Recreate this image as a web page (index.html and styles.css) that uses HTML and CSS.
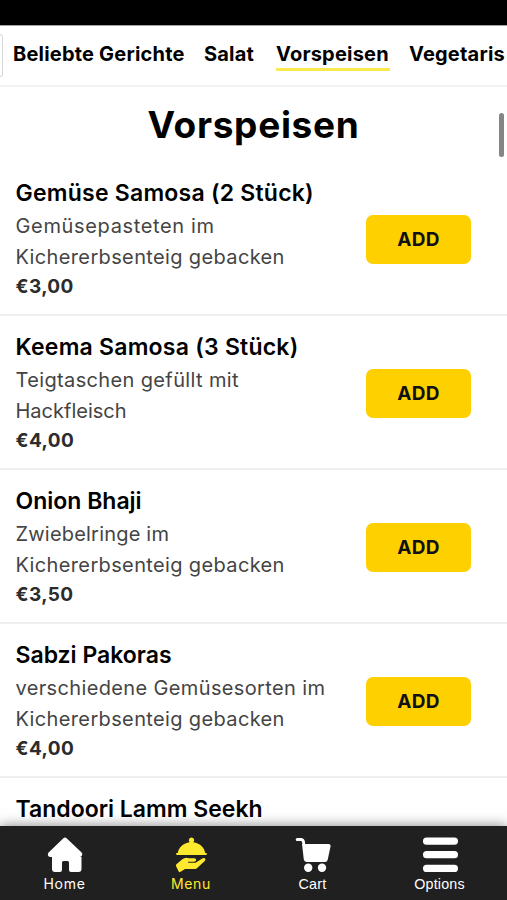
FILE: index.html
```html
<!DOCTYPE html>
<html lang="de">
<head>
    <meta charset="UTF-8">
    <meta name="viewport" content="width=device-width, initial-scale=1.0">
    <title>Vorspeisen</title>
    <link rel="stylesheet" href="styles.css">
</head>
<body>
    <div class="status-bar"></div>

    <nav class="categories">
        <span class="search-box"></span>
        <a class="wide">Beliebte Gerichte</a>
        <a class="salat">Salat</a>
        <a class="active">Vorspeisen</a>
        <a class="vegi">Vegetaris</a>
    </nav>

    <main class="menu">
        <h1>Vorspeisen</h1>

        <div class="item">
            <div class="info">
                <h2 class="spaced">Gemüse Samosa (2 Stück)</h2>
                <p><span class="loose">Gemüsepasteten im</span><br>Kichererbsenteig gebacken</p>
                <strong>€3,00</strong>
            </div>
            <button>ADD</button>
        </div>
        <div class="item">
            <div class="info">
                <h2 class="spaced">Keema Samosa (3 Stück)</h2>
                <p>Teigtaschen gefüllt mit<br><span class="tight">Hackfleisch</span></p>
                <strong>€4,00</strong>
            </div>
            <button>ADD</button>
        </div>
        <div class="item">
            <div class="info">
                <h2>Onion Bhaji</h2>
                <p><span class="narrow">Zwiebelringe im</span><br>Kichererbsenteig gebacken</p>
                <strong>€3,50</strong>
            </div>
            <button>ADD</button>
        </div>
        <div class="item">
            <div class="info">
                <h2>Sabzi Pakoras</h2>
                <p>verschiedene Gemüsesorten im<br>Kichererbsenteig gebacken</p>
                <strong>€4,00</strong>
            </div>
            <button>ADD</button>
        </div>
        <div class="item">
            <div class="info">
                <h2>Tandoori Lamm Seekh</h2>
            </div>
        </div>
    </main>

    <div class="scroll-thumb"></div>

    <footer class="tab-bar">
        <a class="tab home">
            <svg viewBox="0 0 36 36"><path d="M16.4 1.2Q18 0 19.6 1.2L34.6 15.5Q36 17 34.8 18.8Q34 20 32.3 20H34.5V32Q34.5 35 31.5 35H24Q22 35 22 33V25.5Q22 24 20.5 24H16.5Q15 24 15 25.5V33Q15 35 13 35H8Q5 35 5 32V20H3Q1.6 20 1 18.6Q.4 17 1.6 15.5Z"/></svg>
            <span>Home</span>
        </a>
        <a class="tab current">
            <svg viewBox="0 0 36 36"><path d="M18.5 .5A2.7 2.7 0 0 1 20.3 5.2C27.5 6.3 31.6 11 32.2 16H33.2Q34 16 34 16.8Q34 17.9 33 17.9H4Q3 17.9 3 16.8Q3 16 3.8 16H4.8C5.4 11 9.5 6.3 16.7 5.2A2.7 2.7 0 0 1 18.5 .5Z"/><path d="M3.2 27.6L9 22.4Q12.3 20 15.5 21.2H21.3Q23.2 21.2 23.2 23Q23 24.7 21 24.7H15.3Q14.5 25 15.3 25.8H22.5L29.7 21.3Q31.5 20.5 32.3 21.8Q32.8 22.9 31.5 24.2L24.7 30.4Q23.4 32 21.5 32H12L7.2 35.1Q6.1 35.4 5.6 34.3L3.2 29.4Q2.6 28.2 3.2 27.6Z"/></svg>
            <span>Menu</span>
        </a>
        <a class="tab cart">
            <svg viewBox="0 0 36 36"><path d="M2.2 2.6H6.3Q8.2 2.8 8.7 6" fill="none" stroke="currentColor" stroke-width="3" stroke-linecap="round"/><path d="M7 7H33.5Q36 7 35.5 9.5L32.7 22.7Q32.2 25 30 25H11.5Q9.3 25 8.8 22.6Z"/><circle cx="13.2" cy="30.7" r="4.2"/><circle cx="27" cy="30.7" r="4.2"/></svg>
            <span>Cart</span>
        </a>
        <a class="tab options">
            <svg viewBox="0 0 36 36"><rect x="1" y="0.5" width="35" height="7.3" rx="3.6"/><rect x="1" y="14" width="35" height="7.3" rx="3.6"/><rect x="1" y="27.7" width="35" height="7.3" rx="3.6"/></svg>
            <span>Options</span>
        </a>
    </footer>
</body>
</html>
```
FILE: styles.css
```css
* {
    margin: 0;
    padding: 0;
    box-sizing: border-box;
}

body {
    font-family: 'Inter', sans-serif;
    background: #fff;
    color: #000;
    height: 900px;
    display: flex;
    flex-direction: column;
    overflow: hidden;
}

.status-bar {
    height: 25px;
    flex: none;
    background: #000;
}

.categories {
    height: 62px;
    flex: none;
    display: flex;
    align-items: flex-start;
    padding-top: 8px;
    border-top: 1px solid #a5a5a5;
    border-bottom: 2px solid #f2f2f2;
    overflow: hidden;
    white-space: nowrap;
}

.search-box {
    flex: none;
    width: 3px;
    height: 43px;
    margin-right: 10px;
    border: 1px solid #d8d8d8;
    border-left: 0;
    border-radius: 0 4px 4px 0;
}

.categories a {
    flex: none;
    height: 37px;
    margin-right: 19px;
    font-size: 20px;
    line-height: 40px;
    font-weight: 700;
    letter-spacing: 0.2px;
    width: 114px;
}

.categories .wide {
    width: 172px;
}

.categories .salat {
    width: 53px;
}

.categories .active {
    border-bottom: 3px solid #fbea4f;
}

.categories .vegi {
    width: 98px;
    margin-right: 0;
}

.menu {
    flex: 1;
    min-height: 0;
    overflow: hidden;
}

h1 {
    height: 75px;
    font-size: 37px;
    line-height: 76px;
    font-weight: 700;
    letter-spacing: 0.7px;
    text-align: center;
}

.item {
    height: 154px;
    display: flex;
    justify-content: space-between;
    align-items: flex-start;
    padding: 14px 36px 0 15.5px;
    border-bottom: 2px solid #eee;
    white-space: nowrap;
}

.item h2 {
    font-size: 23px;
    line-height: 35px;
    font-weight: 600;
}

.item .spaced {
    letter-spacing: 0.23px;
}

.item p {
    font-size: 20px;
    line-height: 30.5px;
    letter-spacing: 0.36px;
    color: #444;
}

.item .loose {
    letter-spacing: 0.65px;
}

.item .narrow {
    letter-spacing: 0.2px;
}

.item .tight {
    letter-spacing: 0;
}

.item strong {
    display: block;
    font-size: 19px;
    line-height: 30px;
    letter-spacing: 0.4px;
    color: #2c2c2c;
}

.item button {
    width: 105px;
    height: 49px;
    margin-top: 39px;
    background: #ffd000;
    border: none;
    border-radius: 7px;
    font: 700 19px 'Inter', sans-serif;
    letter-spacing: 0.3px;
    color: #111;
}

.scroll-thumb {
    position: fixed;
    top: 113px;
    right: 3px;
    width: 5px;
    height: 44px;
    border-radius: 3px;
    background: #858585;
}

.tab-bar {
    height: 74px;
    flex: none;
    display: grid;
    grid-template-columns: 129px 124px 119px 135px;
    padding-top: 11px;
    background: #202020;
    box-shadow: 0 0 12px rgba(0, 0, 0, 0.5);
    position: relative;
}

.tab {
    display: flex;
    flex-direction: column;
    align-items: center;
    color: #fff;
    font-size: 14px;
    line-height: 22px;
    letter-spacing: 0.7px;
}

.tab svg {
    width: 36px;
    height: 36px;
    fill: currentColor;
}

.tab.current {
    color: #ffe92e;
}

.cart, .options {
    font-family: 'Liberation Sans', sans-serif;
    font-size: 14.3px;
    letter-spacing: 0.2px;
}
```
